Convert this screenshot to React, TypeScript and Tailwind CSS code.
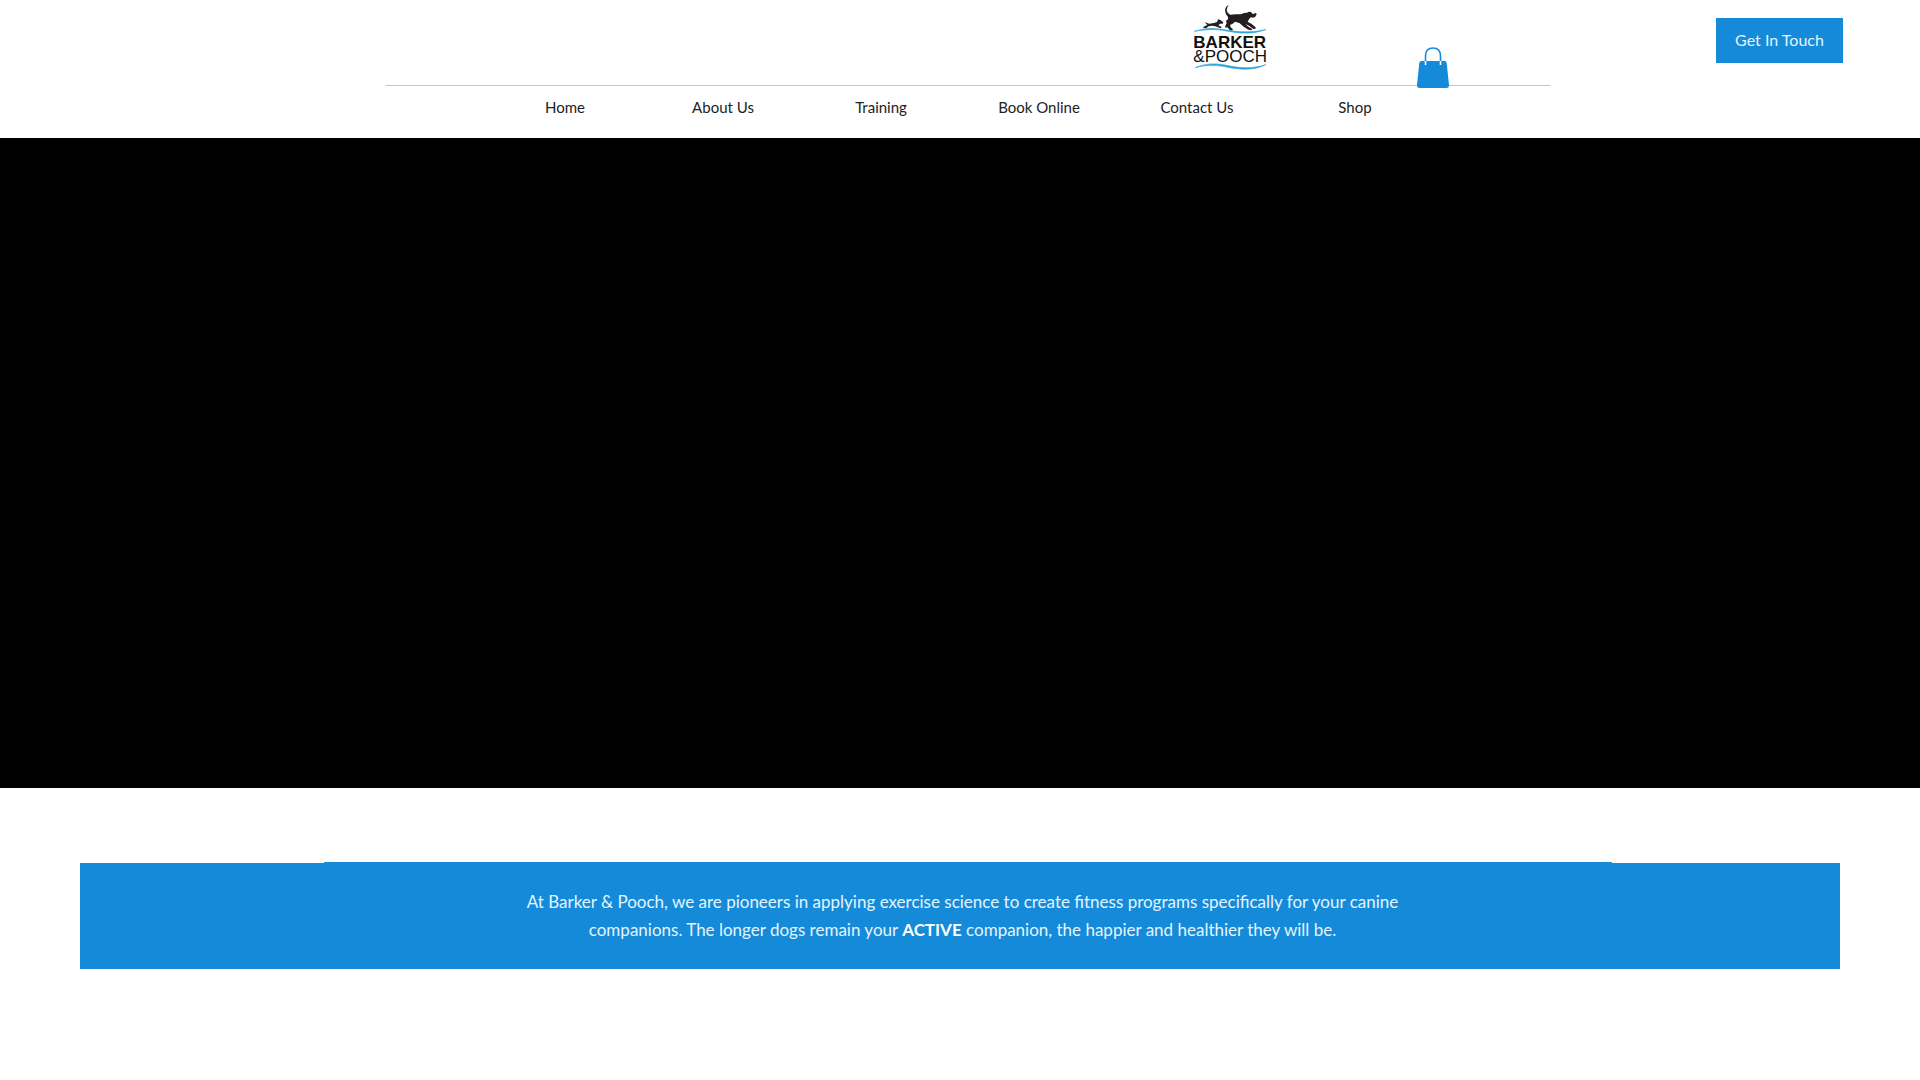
const navItems = ['Home', 'About Us', 'Training', 'Book Online', 'Contact Us', 'Shop'];

function Logo() {
  return (
    <svg viewBox="38 9 228 204" className="h-[68px] w-[76px]" role="img" aria-label="Barker & Pooch">
      <g fill="#231f20">
        <path d="M145 15 Q139 22 139 31 Q141 41 150 44 L166 43 L182 43 L191 39 L200 38 L205 35 L212 36 L217 42 L227 39 L229 43 L225 50 L218 53 L211 52 L206 58 L202 65 L214 72 L226 82 L225 87 L218 86 L206 77 L195 72 L204 80 L216 87 L213 91 L204 89 L190 80 L177 69 L164 65 L157 71 L149 75 L151 82 L158 88 L155 92 L148 90 L141 82 L137 75 L143 66 L143 51 Q134 42 134 30 Q136 18 145 15Z" />
        <path d="M137 62 L145 56 L147 65 L144 78 L137 84 L134 80 L139 70Z" />
        <path d="M73 66 L86 71 L101 69 L110 66 L113 58 L120 60 L129 67 L127 71 L119 71 L114 76 L124 81 L121 85 L105 79 L95 77 L85 79 L77 85 L68 83 L70 80 L81 75Z" />
      </g>
      <path d="M42 94 C70 86 91 83 116 87 C151 91 188 103 256 89 C211 105 174 99 139 93 C104 86 78 88 42 94Z" fill="#29a3dc" stroke="#29a3dc" strokeWidth="2" />
      <path d="M45 203 C75 190 106 189 138 196 C179 205 216 207 256 194 C220 213 178 209 139 201 C105 194 78 194 45 203Z" fill="#29a3dc" stroke="#29a3dc" strokeWidth="2" />
      <text x="39" y="143" fontSize="51" fontWeight="700" fill="#111111" className="font-['Liberation_Sans',sans-serif]">BARKER</text>
      <text x="39" y="187" fontSize="51" fill="#111111" className="font-['Liberation_Sans',sans-serif]">&amp;POOCH</text>
    </svg>
  );
}

function BagIcon() {
  return (
    <svg viewBox="0 0 32 41" className="h-[41px] w-8" aria-hidden="true">
      <path d="M4.500 14 H27.500 Q29.500 14 29.700 16 L32 38 Q32.200 41 29.500 41 H2.500 Q-0.200 41 0 38 L2.300 16 Q2.500 14 4.500 14Z" fill="#158ad8" />
      <path d="M8.500 18 V9 Q8.500 1 16 1 Q23.500 1 23.500 9 V18" fill="none" stroke="#158ad8" strokeWidth="1.600" />
      <path d="M8.500 14 V18 M23.500 14 V18" fill="none" stroke="#ffffff" strokeWidth="1.600" />
    </svg>
  );
}

export default function App() {
  return (
    <div className="min-h-screen bg-white font-['Lato',sans-serif]">
      <header className="h-[138px]">
        <div className="grid h-[85px] grid-cols-[1fr_minmax(0,980px)_1fr]">
          <div />
          <div className="flex justify-end pr-px">
            <a href="#home" className="mt-[3px]"><Logo /></a>
            <a href="#cart" aria-label="Cart" className="relative mt-[47px] ml-[148px]"><BagIcon /></a>
          </div>
          <div className="flex items-start justify-end pt-[18px] pr-[77px]">
            <button type="button" className="h-[45px] w-[127px] bg-[#158ad8] pb-0.5 text-base text-[#e2f5ff]">Get In Touch</button>
          </div>
        </div>
        <div className="pl-4">
          <div className="mx-auto h-px max-w-[1164px] bg-[#c4c4c4]" />
        </div>
        <nav className="mx-auto mt-[7px] grid max-w-[948px] grid-cols-6">
          {navItems.map((item) => (
            <a key={item} href="#" className="py-px text-center text-[15px] leading-[26px] text-[#222222]">{item}</a>
          ))}
        </nav>
      </header>
      <section aria-label="Video" className="h-[650px] bg-black" />
      <section className="px-20 pt-[75px]">
        <div className="flex justify-center bg-[#158ad8] pl-4">
          <div className="-mt-px w-full max-w-[1288px] bg-[#158ad8] pt-[26px] pr-[11px] pb-[25px] text-center text-[17px] leading-7 text-[#e2f5ff]">
            <p>
              At Barker &amp; Pooch, we are pioneers in applying exercise science to create fitness programs specifically for your canine
              <br />
              companions. The longer dogs remain your <strong className="font-bold text-white">ACTIVE</strong> companion, the happier and healthier they will be.
            </p>
          </div>
        </div>
      </section>
    </div>
  );
}
